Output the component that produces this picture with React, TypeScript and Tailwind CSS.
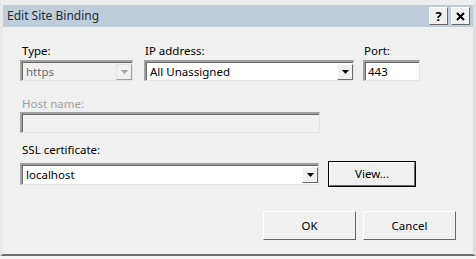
import React from "react";

const font = { fontFamily: '"Noto Sans", "Open Sans", sans-serif' };

function Arrow({ disabled }: { disabled?: boolean }) {
  return (
    <svg width="7" height="4" viewBox="0 0 7 4">
      <path d="M0 0 H7 L3.5 4 Z" fill={disabled ? "#a0a0a0" : "#000"} />
    </svg>
  );
}

function DropBtn({ disabled }: { disabled?: boolean }) {
  return (
    <div
      className={
        "w-[16px] h-[16px] flex items-center justify-center bg-[#f0f0f0] border " +
        (disabled
          ? "border-t-[#e3e3e3] border-l-[#e3e3e3] border-r-[#a0a0a0] border-b-[#a0a0a0]"
          : "border-t-[#fff] border-l-[#fff] border-r-[#696969] border-b-[#696969]")
      }
    >
      <Arrow disabled={disabled} />
    </div>
  );
}

function Sunken({
  className,
  children,
  bg = "bg-white",
}: {
  className?: string;
  children?: React.ReactNode;
  bg?: string;
}) {
  return (
    <div
      className={
        "border-t-2 border-l-2 border-r border-b border-t-[#a0a0a0] border-l-[#a0a0a0] border-r-[#e3e3e3] border-b-[#e3e3e3] " +
        (className ?? "")
      }
    >
      <div
        className={
          "h-full w-full flex items-center border-t border-l border-t-[#696969] border-l-[#696969] " + bg
        }
      >
        {children}
      </div>
    </div>
  );
}

function Button({ label, className }: { label: string; className?: string }) {
  return (
    <div
      className={
        "border border-t-white border-l-white border-r-[#696969] border-b-[#696969] bg-[#f0f0f0] flex items-center justify-center text-[11.5px] text-black " +
        (className ?? "")
      }
    >
      {label}
    </div>
  );
}

export default function App() {
  return (
    <div className="w-[476px] h-[259px] bg-white" style={font}>
      <div className="w-[476px] h-[259px] flex flex-col border-b-[3px] border-b-[#f4f4f4]">
        <div className="flex-1 flex flex-col bg-[#f0f0f0] border-t-[5px] border-t-[#eceef0] border-l-[3px] border-l-[#e6e8ea] border-r-[3px] border-r-[#dcdfe3] border-b-[2px] border-b-[#6e6e6e]">
          <div className="h-[22px] bg-[#bfcddb] flex items-center justify-between pl-[4px] pr-[3px]">
            <span className="text-[12px] text-[#1e2f3e]">Edit Site Binding</span>
            <div className="flex gap-[3px]">
              <div className="w-[19px] h-[18px] bg-[#f0f0f0] border border-t-white border-l-white border-r-[#696969] border-b-[#696969] flex items-center justify-center text-[13px] font-bold leading-none">
                ?
              </div>
              <div className="w-[19px] h-[18px] bg-[#f0f0f0] border border-t-white border-l-white border-r-[#696969] border-b-[#696969] flex items-center justify-center">
                <svg width="9" height="9" viewBox="0 0 9 9">
                  <path d="M1 1 L8 8 M8 1 L1 8" stroke="#000" strokeWidth="2" />
                </svg>
              </div>
            </div>
          </div>
          <div className="flex-1 flex flex-col pl-[17px] pt-[16px] text-[11.5px] text-black">
            <div className="flex">
              <div className="flex flex-col w-[124px]">
                <span className="h-[17px] pl-[2px] leading-[15px]">Type:</span>
                <Sunken className="w-[113px] h-[21px]" bg="bg-[#f0f0f0]">
                  <span className="flex-1 pl-[3px] text-[#6d6d6d]">https</span>
                  <DropBtn disabled />
                </Sunken>
              </div>
              <div className="flex flex-col w-[219px]">
                <span className="h-[17px] pl-[1px] leading-[15px]">IP address:</span>
                <Sunken className="w-[210px] h-[21px]">
                  <span className="flex-1 pl-[3px]">All Unassigned</span>
                  <DropBtn />
                </Sunken>
              </div>
              <div className="flex flex-col">
                <span className="h-[17px] pl-[1px] leading-[15px]">Port:</span>
                <Sunken className="w-[57px] h-[21px]">
                  <span className="pl-[2px]">443</span>
                </Sunken>
              </div>
            </div>
            <span className="mt-[15px] h-[16px] pl-[2px] leading-[15px] text-[#a0a0a0]">Host name:</span>
            <Sunken className="w-[300px] h-[21px]" bg="bg-[#f0f0f0]" />
            <span className="mt-[9px] h-[19px] pl-[2px] leading-[15px]">SSL certificate:</span>
            <div className="flex items-center">
              <Sunken className="w-[299px] h-[22px]">
                <span className="flex-1 pl-[3px]">localhost</span>
                <DropBtn />
              </Sunken>
              <div className="ml-[9px] w-[88px] h-[26px] border border-black">
                <Button label="View..." className="w-full h-full" />
              </div>
            </div>
            <div className="flex mt-[24px] pl-[243px] gap-[7px]">
              <Button label="OK" className="w-[93px] h-[29px]" />
              <Button label="Cancel" className="w-[93px] h-[29px]" />
            </div>
          </div>
        </div>
      </div>
    </div>
  );
}
